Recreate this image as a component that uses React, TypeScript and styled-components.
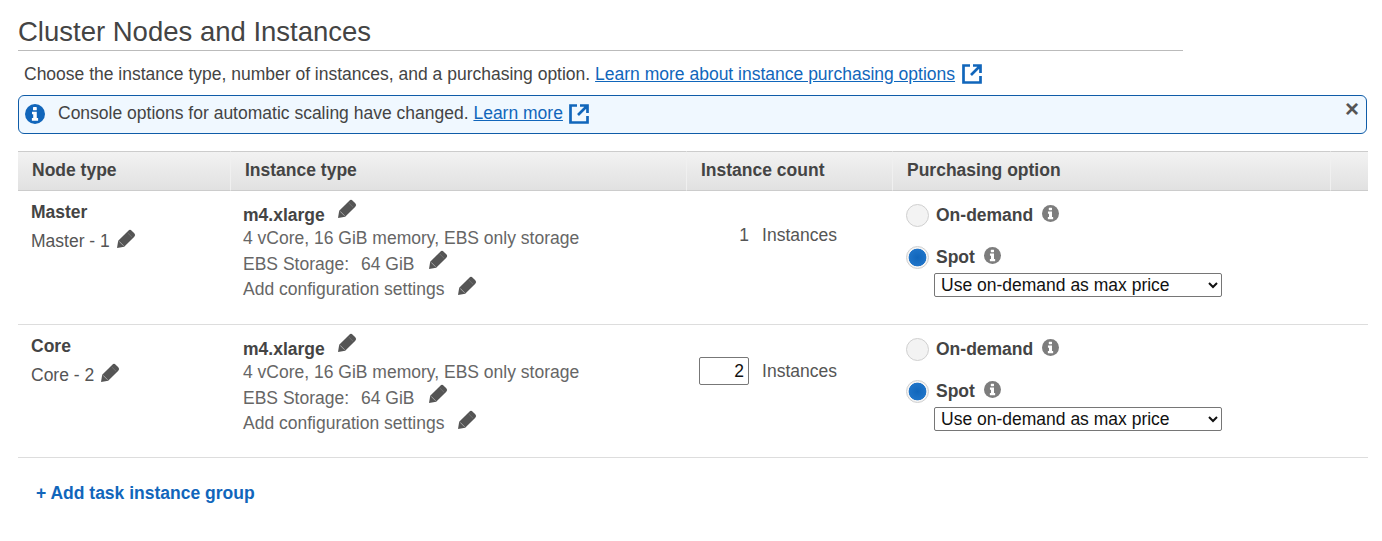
import React, { FC } from "react";
import styled, { createGlobalStyle } from "styled-components";

const GlobalStyle = createGlobalStyle`
  html, body {
    margin: 0;
    background: #ffffff;
    font-family: "Liberation Sans", Arial, sans-serif;
    font-size: 17.5px;
    color: #444444;
  }
`;

const Page = styled.div`
  width: 1350px;
  height: 541px;
  margin-left: 18px;
  overflow: hidden;
`;

const Title = styled.h2`
  width: 1165px;
  height: 50px;
  margin: 0;
  border-bottom: 1px solid #bbbbbb;
  font-size: 27.5px;
  font-weight: 400;
  line-height: 64px;
  color: #444444;
`;

const Intro = styled.div`
  display: flex;
  align-items: center;
  box-sizing: border-box;
  height: 44px;
  padding: 2px 0 0 6px;
  color: #444444;
  white-space: pre;
`;

const DocLink = styled.a`
  color: #1166bb;
  text-decoration: underline;
`;

const ExternalSvg = styled.svg<{ $gap: number }>`
  width: 20px;
  height: 20px;
  margin-left: ${(p) => p.$gap}px;
  flex: none;
`;

const ExternalIcon: FC<{ gap: number }> = ({ gap }) => (
  <ExternalSvg $gap={gap} viewBox="0 0 20 20">
    <path
      d="M8 1.500H1.500V18.500H18.500V12M11 1.500H18.500V9M18 2L9 11"
      fill="none"
      stroke="#1166bb"
      strokeWidth="2.7"
    />
  </ExternalSvg>
);

const InfoSvg = styled.svg<{ $alert?: boolean }>`
  flex: none;
  width: ${(p) => (p.$alert ? 20 : 17)}px;
  height: ${(p) => (p.$alert ? 20 : 17)}px;
  margin: ${(p) => (p.$alert ? "0 13px 0 0" : "-3px 0 0 9px")};
  color: ${(p) => (p.$alert ? "#1166bb" : "#7d7d7d")};
`;

const InfoIcon: FC<{ alert?: boolean }> = ({ alert }) => (
  <InfoSvg $alert={alert} viewBox="0 0 18 18">
    <circle cx="9" cy="9" r="9" fill="currentColor" />
    <rect x="7.200" y="2.800" width="3.400" height="2.800" rx="0.500" fill="#ffffff" />
    <path
      d="M6.300 7H10.600V12.700H11.800V15H6.200V12.700H7.400V9.300H6.300Z"
      fill="#ffffff"
    />
  </InfoSvg>
);

const Alert = styled.div`
  position: relative;
  display: flex;
  align-items: center;
  box-sizing: border-box;
  width: 1349px;
  height: 39px;
  padding: 0 0 2px 6px;
  border: 1px solid #0f5ca8;
  border-radius: 6px;
  background: #f0f8ff;
  white-space: pre;
`;

const CloseButton = styled.span`
  position: absolute;
  top: 2px;
  right: 7px;
  font-size: 24px;
  font-weight: 700;
  line-height: 22px;
  color: #555555;
`;

const Grid = styled.div`
  display: grid;
  grid-template-columns: 213px 456px 206px 438px 37px;
  grid-template-rows: 40px 134px 133px;
  margin-top: 17px;
`;

const HeaderCell = styled.div`
  display: flex;
  align-items: center;
  box-sizing: border-box;
  padding: 0 0 2px 14px;
  border-top: 1px solid #cccccc;
  border-bottom: 1px solid #cccccc;
  border-right: 1px solid #f0f0f0;
  background: linear-gradient(#f2f2f2, #e1e1e1);
  font-weight: 700;
  color: #444444;

  &:nth-of-type(5) {
    border-right: 0;
  }
`;

const Cell = styled.div<{ $padLeft: number }>`
  box-sizing: border-box;
  padding-left: ${(p) => p.$padLeft}px;
  border-bottom: 1px solid #dddddd;
`;

const NodeName = styled.div`
  margin-top: 10px;
  line-height: 22px;
  font-weight: 700;
  color: #444444;
`;

const NodeLine = styled.div`
  display: flex;
  align-items: center;
  margin-top: 7px;
  line-height: 22px;
  color: #555555;
  white-space: pre;
`;

const PencilSvg = styled.svg<{ $gap: number; $lift: number }>`
  flex: none;
  width: 20px;
  height: 20px;
  margin-left: ${(p) => p.$gap}px;
  margin-top: ${(p) => -p.$lift}px;
`;

const Pencil: FC<{ gap: number; lift: number }> = ({ gap, lift }) => (
  <PencilSvg $gap={gap} $lift={lift} viewBox="0 0 20 20">
    <path
      d="M1 19L2.200 11.800L12.300 1.700Q14 0 15.700 1.700L18.300 4.300Q20 6 18.300 7.700L8.200 17.800Z"
      fill="#555555"
    />
    <path d="M3.200 12.400L7.600 16.800" stroke="#a8a8a8" strokeWidth="1" />
    <path d="M11.800 4L16 8.200" stroke="#777777" strokeWidth="0.800" />
  </PencilSvg>
);

const TypeName = styled.div`
  display: flex;
  align-items: center;
  margin-top: 13px;
  height: 22px;
  font-weight: 700;
  color: #444444;
`;

const InfoLine = styled.div`
  display: flex;
  align-items: center;
  height: 25.5px;
  color: #666666;
  white-space: pre;
`;

const Storage = styled.span`
  margin-left: 12px;
`;

const CountRow = styled.div<{ $top: number }>`
  display: flex;
  align-items: center;
  justify-content: flex-end;
  width: 150px;
  height: 28px;
  margin-top: ${(p) => p.$top}px;
  color: #555555;
`;

const CountBox = styled.input`
  box-sizing: border-box;
  width: 50px;
  height: 28px;
  padding: 0 4px 0 0;
  margin: 0;
  border: 1px solid #777777;
  border-radius: 2px;
  font: inherit;
  color: #111111;
  text-align: right;
`;

const CountValue = styled.span`
  color: #555555;
`;

const CountLabel = styled.span`
  margin-left: 13px;
`;

const OptionRow = styled.div<{ $top: number }>`
  display: flex;
  align-items: center;
  margin-top: ${(p) => p.$top}px;
  height: 24px;
`;

const Radio = styled.span<{ $on?: boolean }>`
  box-sizing: border-box;
  width: 23px;
  height: 23px;
  margin-right: 7px;
  border-radius: 50%;
  border: 1px solid #d0d0d0;
  background: ${(p) =>
    p.$on
      ? "radial-gradient(circle, #1166bb 0, #1f74c8 8.500px, #f4f4f4 9.200px)"
      : "#f3f3f3"};
`;

const OptionLabel = styled.span`
  font-weight: 700;
  color: #444444;
`;

const PriceSelect = styled.select`
  display: block;
  box-sizing: border-box;
  width: 288px;
  height: 24px;
  margin: 4px 0 0 28px;
  padding: 0 0 0 2px;
  border: 1px solid #767676;
  border-radius: 2px;
  background: #ffffff;
  font: inherit;
  color: #111111;
`;

const AddGroup = styled.a`
  display: block;
  margin: 24px 0 0 18px;
  line-height: 22px;
  font-weight: 700;
  color: #1166bb;
`;

interface NodeGroup {
  kind: string;
  count: number;
  editable: boolean;
}

const groups: NodeGroup[] = [
  { kind: "Master", count: 1, editable: false },
  { kind: "Core", count: 2, editable: true },
];

const GroupRow: FC<{ group: NodeGroup }> = ({ group }) => (
  <>
    <Cell $padLeft={13}>
      <NodeName>{group.kind}</NodeName>
      <NodeLine>
        {group.kind} - {group.count}
        <Pencil gap={6} lift={4} />
      </NodeLine>
    </Cell>
    <Cell $padLeft={12}>
      <TypeName>
        m4.xlarge
        <Pencil gap={12} lift={12} />
      </TypeName>
      <InfoLine>4 vCore, 16 GiB memory, EBS only storage</InfoLine>
      <InfoLine>
        EBS Storage:
        <Storage>64 GiB</Storage>
        <Pencil gap={13} lift={8} />
      </InfoLine>
      <InfoLine>
        Add configuration settings
        <Pencil gap={13} lift={8} />
      </InfoLine>
    </Cell>
    <Cell $padLeft={0}>
      <CountRow $top={group.editable ? 32 : 30}>
        {group.editable ? (
          <CountBox defaultValue={group.count} />
        ) : (
          <CountValue>{group.count}</CountValue>
        )}
        <CountLabel>Instances</CountLabel>
      </CountRow>
    </Cell>
    <Cell $padLeft={13}>
      <OptionRow $top={12}>
        <Radio />
        <OptionLabel>On-demand</OptionLabel>
        <InfoIcon />
      </OptionRow>
      <OptionRow $top={18}>
        <Radio $on />
        <OptionLabel>Spot</OptionLabel>
        <InfoIcon />
      </OptionRow>
      <PriceSelect defaultValue="ondemand">
        <option value="ondemand">Use on-demand as max price</option>
      </PriceSelect>
    </Cell>
    <Cell $padLeft={0} />
  </>
);

const App: FC = () => (
  <Page>
    <GlobalStyle />
    <Title>Cluster Nodes and Instances</Title>
    <Intro>
      Choose the instance type, number of instances, and a purchasing option.{" "}
      <DocLink>Learn more about instance purchasing options</DocLink>
      <ExternalIcon gap={7} />
    </Intro>
    <Alert>
      <InfoIcon alert />
      Console options for automatic scaling have changed.{" "}
      <DocLink>Learn more</DocLink>
      <ExternalIcon gap={6} />
      <CloseButton>×</CloseButton>
    </Alert>
    <Grid>
      <HeaderCell>Node type</HeaderCell>
      <HeaderCell>Instance type</HeaderCell>
      <HeaderCell>Instance count</HeaderCell>
      <HeaderCell>Purchasing option</HeaderCell>
      <HeaderCell />
      {groups.map((group) => (
        <GroupRow key={group.kind} group={group} />
      ))}
    </Grid>
    <AddGroup>+ Add task instance group</AddGroup>
  </Page>
);

export default App;
